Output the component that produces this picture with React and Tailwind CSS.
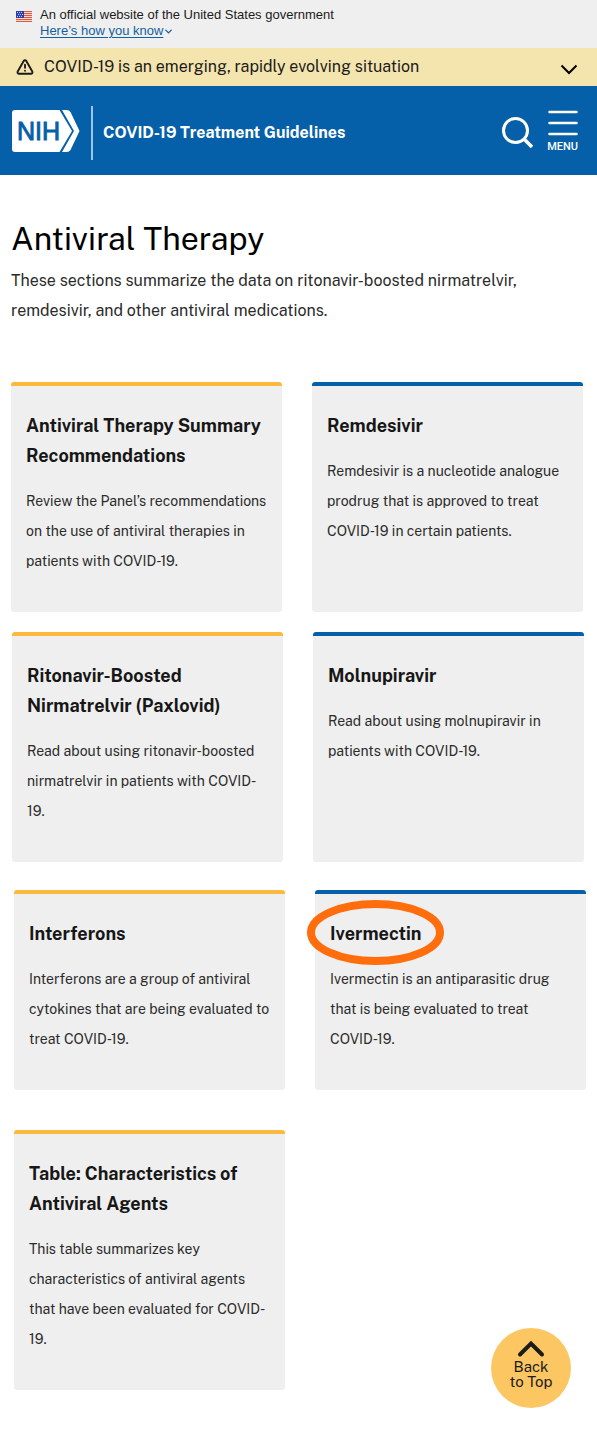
import { AlertTriangle, ChevronDown } from "lucide-react";

const rows = [
  {
    id: "treatments",
    className: "mt-14 gap-y-5 pl-[11px] pr-[14px]",
    cards: [
      {
        title: "Antiviral Therapy Summary Recommendations",
        text: "Review the Panel’s recommendations on the use of antiviral therapies in patients with COVID-19.",
      },
      {
        title: "Remdesivir",
        text: "Remdesivir is a nucleotide analogue prodrug that is approved to treat COVID-19 in certain patients.",
      },
    ],
  },
  {
    id: "oral",
    className: "mt-5 gap-y-5 pl-3 pr-[13px]",
    cards: [
      {
        title: "Ritonavir-Boosted Nirmatrelvir (Paxlovid)",
        text: "Read about using ritonavir-boosted nirmatrelvir in patients with COVID-19.",
      },
      {
        title: "Molnupiravir",
        text: "Read about using molnupiravir in patients with COVID-19.",
      },
    ],
  },
  {
    id: "other",
    className: "mt-7 gap-y-10 pl-[14px] pr-[11px]",
    cards: [
      {
        title: "Interferons",
        text: "Interferons are a group of antiviral cytokines that are being evaluated to treat COVID-19.",
      },
      {
        title: "Ivermectin",
        text: "Ivermectin is an antiparasitic drug that is being evaluated to treat COVID-19.",
        circled: true,
      },
      {
        title: "Table: Characteristics of Antiviral Agents",
        text: "This table summarizes key characteristics of antiviral agents that have been evaluated for COVID-19.",
      },
    ],
  },
];

function Flag() {
  return (
    <svg viewBox="0 0 16 11" className="mt-[11px] h-[11px] w-4 shrink-0" aria-hidden="true">
      <rect width="16" height="11" fill="#f7d9d2" />
      {[0, 2, 4, 6, 8, 10].map((y) => (
        <rect key={y} y={y} width="16" height="1" fill="#e2583f" />
      ))}
      <rect width="8" height="7" fill="#2b3fb5" />
      {[1, 3, 5].map((y) =>
        [1, 3, 5].map((x) => (
          <rect key={`${x}-${y}`} x={x + (y === 3 ? 1 : 0)} y={y} width="1" height="1" fill="#c5cbee" />
        ))
      )}
    </svg>
  );
}

function NihLogo() {
  return (
    <svg viewBox="0 0 68 42" className="h-[42px] w-[68px] shrink-0" role="img" aria-label="NIH">
      <path d="M3 0H47.500L60 21L47.500 42H3Q0 42 0 39V3Q0 0 3 0Z" fill="#fff" />
      <path d="M50 0H55Q57 0 58.500 2L67.500 21L58.500 40Q57 42 55 42H50L62 21Z" fill="#fff" />
      <text x="5" y="30" fontSize="25" fill="#0560a9" stroke="#0560a9" strokeWidth="0.9" className="font-['Liberation_Sans',sans-serif]">
        NIH
      </text>
    </svg>
  );
}

function Card({ title, text, circled, blue }) {
  return (
    <article
      className={`rounded-[3px] border-t-4 bg-[#efefef] px-[15px] pt-[25px] pb-9 ${
        blue ? "border-[#0560a9]" : "border-[#fbb93e]"
      }`}
    >
      <h2 className="text-lg leading-[30px] font-bold text-[#171717]">
        <a href="#" className="relative inline-block">
          {title}
          {circled && (
            <svg
              viewBox="0 0 138 66"
              className="pointer-events-none absolute -top-5 -left-6 h-[66px] w-[138px] max-w-none"
              aria-hidden="true"
            >
              <ellipse cx="69.500" cy="33.500" rx="64.500" ry="28.500" fill="none" stroke="#ff6d0d" strokeWidth="8" />
            </svg>
          )}
        </a>
      </h2>
      <p className="mt-[15px] text-[14px] leading-[30px] text-[#2b2b2b]">{text}</p>
    </article>
  );
}

export default function App() {
  return (
    <div className="bg-white pb-11 font-['Public_Sans','Inter',sans-serif] text-[#1b1b1b]">
      <div className="flex h-12 gap-2 bg-[#efefef] px-4 font-['Liberation_Sans',sans-serif] text-[13px] leading-4">
        <Flag />
        <div className="pt-[7px]">
          <p>An official website of the United States government</p>
          <button type="button" className="flex items-center text-[#14609f]">
            <span className="underline underline-offset-2">Here’s how you know</span>
            <ChevronDown className="h-[11px] w-[11px]" strokeWidth={3} />
          </button>
        </div>
      </div>

      <div className="flex h-[38px] items-center bg-[#f4e5ae] pr-[19px] pl-4">
        <AlertTriangle className="h-[18px] w-[18px]" strokeWidth={2.5} />
        <p className="ml-2.5 grow text-base">COVID-19 is an emerging, rapidly evolving situation</p>
        <button type="button" aria-label="Show details">
          <svg viewBox="0 0 18 12" className="mt-1.5 h-3 w-[18px]" fill="none" stroke="#000" strokeWidth="2">
            <path d="M1.500 1.500L9 9L16.500 1.500" />
          </svg>
        </button>
      </div>

      <header className="flex h-[89px] items-center bg-[#0560a9] pt-1 pr-[19px] pl-3 text-white">
        <div className="pb-1">
          <NihLogo />
        </div>
        <div className="ml-[11px] h-[54px] w-0.5 bg-[#a0c4e6]" />
        <a href="#" className="ml-2.5 grow text-base font-bold">
          COVID-19 Treatment Guidelines
        </a>
        <button type="button" aria-label="Search">
          <svg viewBox="0 0 32 32" className="h-8 w-8" fill="none" stroke="currentColor" strokeWidth="3">
            <circle cx="14.500" cy="13.500" r="12" />
            <path d="M23 22L31 30" strokeWidth="3.500" />
          </svg>
        </button>
        <button type="button" className="ml-3.5 flex flex-col items-center">
          <svg viewBox="0 0 30 26" className="h-[26px] w-[30px]" fill="none" stroke="currentColor" strokeWidth="2.500" strokeLinecap="round">
            <path d="M1.500 2H28.500M1.500 13H28.500M1.500 24H28.500" />
          </svg>
          <span className="mt-[3px] font-['Roboto',sans-serif] text-[11px] leading-4 font-medium">MENU</span>
        </button>
      </header>

      <main>
        <div className="px-[11px] pt-11">
          <h1 className="text-[32px] leading-10 text-black">Antiviral Therapy</h1>
          <p className="mt-[7px] text-base leading-[30px] text-[#2b2b2b]">
            These sections summarize the data on ritonavir-boosted nirmatrelvir, remdesivir, and other
            antiviral medications.
          </p>
        </div>

        {rows.map((row) => (
          <div key={row.id} className={`grid grid-cols-2 gap-x-[30px] ${row.className}`}>
            {row.cards.map((card, i) => (
              <Card key={card.title} {...card} blue={i % 2 === 1} />
            ))}
          </div>
        ))}
      </main>

      <a
        href="#"
        className="fixed right-[26px] bottom-[26px] flex h-20 w-20 flex-col items-center rounded-full bg-[#fcc663] pt-3 text-[15px] leading-[15px]"
      >
        <svg viewBox="0 0 28 18" className="mb-px h-[18px] w-7" fill="none" stroke="currentColor" strokeWidth="4" strokeLinecap="round">
          <path d="M3 14.500L14 3.500L25 14.500" />
        </svg>
        <span>Back</span>
        <span>to Top</span>
      </a>
    </div>
  );
}
